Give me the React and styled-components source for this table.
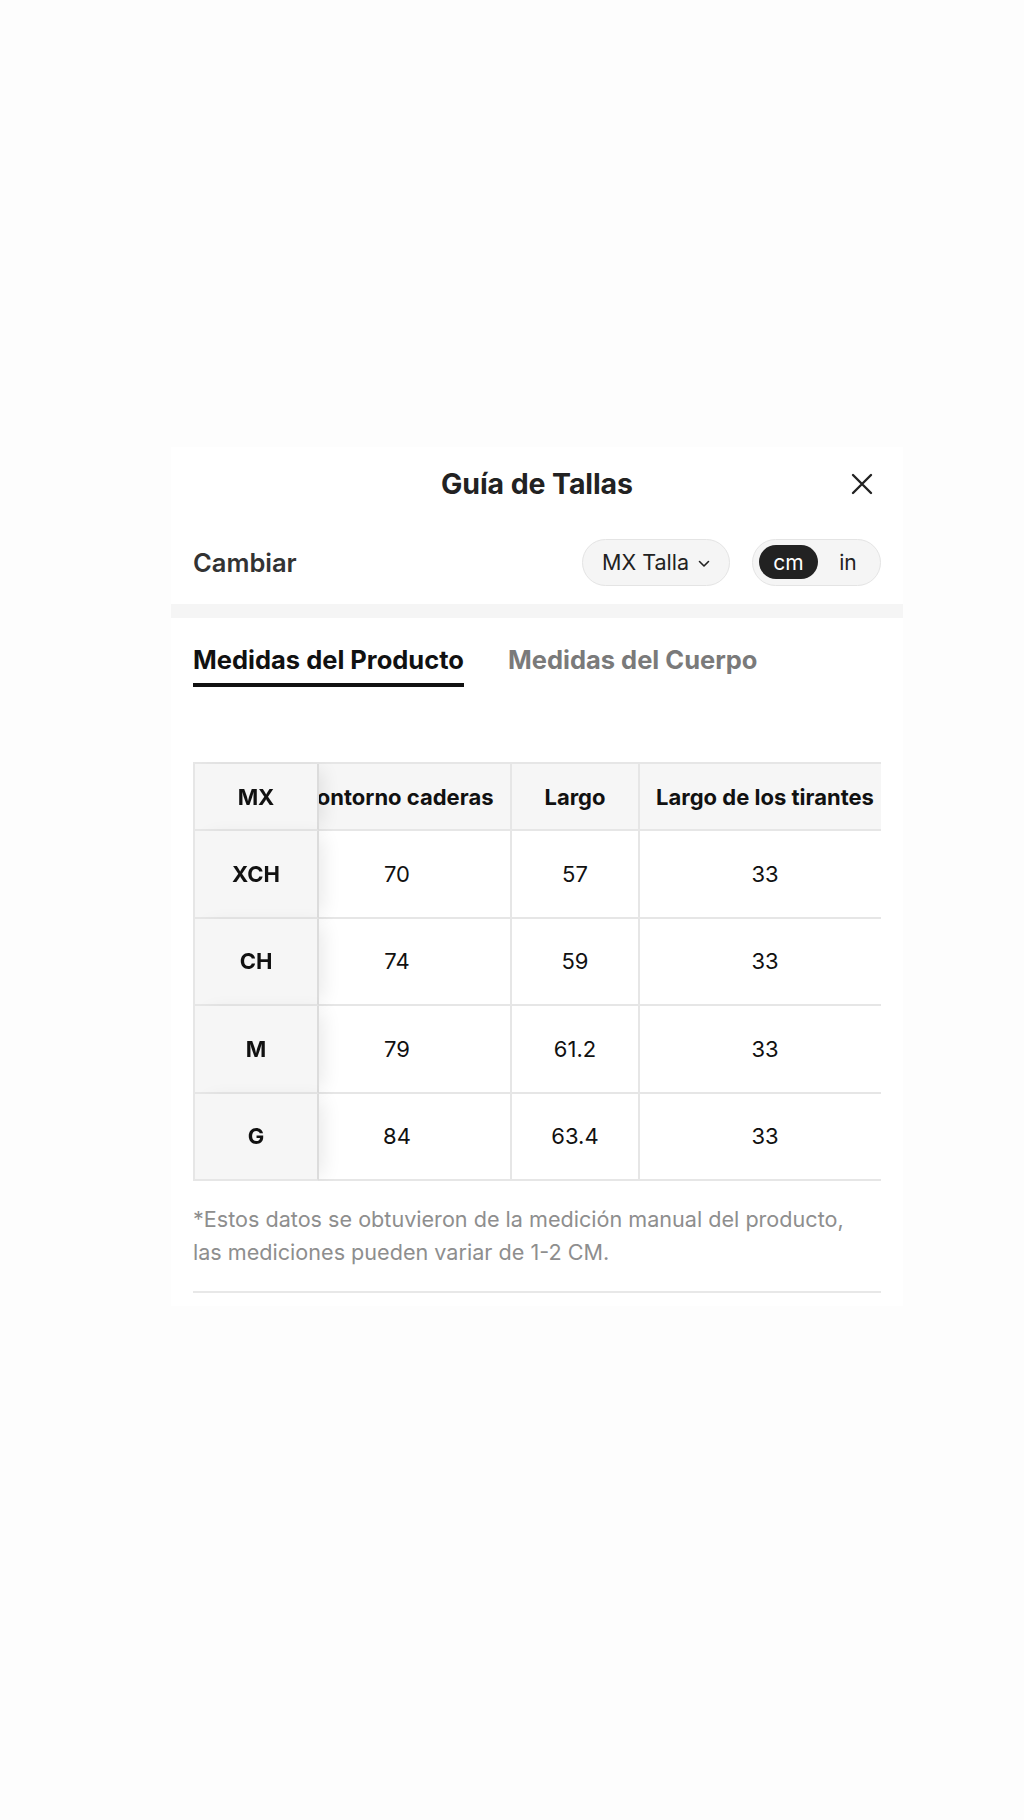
import React, { useEffect, useRef } from "react";
import styled, { createGlobalStyle } from "styled-components";

const GlobalStyle = createGlobalStyle`
  body {
    margin: 0;
    background: #fdfdfd;
    font-family: Inter, "Noto Sans", "Liberation Sans", sans-serif;
    color: #222;
  }
`;

const rows = [
  { size: "XCH", hips: "70", length: "57", straps: "33" },
  { size: "CH", hips: "74", length: "59", straps: "33" },
  { size: "M", hips: "79", length: "61.2", straps: "33" },
  { size: "G", hips: "84", length: "63.4", straps: "33" },
];

export default function App() {
  const scrollRef = useRef(null);
  useEffect(() => {
    if (scrollRef.current) scrollRef.current.scrollLeft = 35;
  }, []);

  return (
    <>
      <GlobalStyle />
      <Page>
        <Panel>
          <Header>
            <Title>Guía de Tallas</Title>
            <CloseBtn aria-label="Cerrar">
              <svg width="24" height="24" viewBox="0 0 24 24">
                <path
                  d="M3 3 L21 21 M21 3 L3 21"
                  stroke="#222"
                  strokeWidth="2.4"
                  strokeLinecap="round"
                />
              </svg>
            </CloseBtn>
          </Header>

          <SwitchRow>
            <SwitchLabel>Cambiar</SwitchLabel>
            <Controls>
              <SelectPill>
                MX Talla
                <svg width="12" height="8" viewBox="0 0 12 8">
                  <path
                    d="M1.5 1.5 L6 6 L10.5 1.5"
                    fill="none"
                    stroke="#222"
                    strokeWidth="1.6"
                    strokeLinecap="round"
                    strokeLinejoin="round"
                  />
                </svg>
              </SelectPill>
              <UnitToggle>
                <Unit active>cm</Unit>
                <Unit>in</Unit>
              </UnitToggle>
            </Controls>
          </SwitchRow>

          <Band />

          <Tabs>
            <Tab active>Medidas del Producto</Tab>
            <Tab>Medidas del Cuerpo</Tab>
          </Tabs>

          <Body>
            <TableScroll ref={scrollRef}>
              <Table>
                <colgroup>
                  <col style={{ width: 126 }} />
                  <col style={{ width: 228 }} />
                  <col style={{ width: 128 }} />
                  <col style={{ width: 252 }} />
                </colgroup>
                <thead>
                  <tr>
                    <StickyCell as="th" head>
                      MX
                    </StickyCell>
                    <HeadCell>Contorno caderas</HeadCell>
                    <HeadCell>Largo</HeadCell>
                    <HeadCell>Largo de los tirantes</HeadCell>
                  </tr>
                </thead>
                <tbody>
                  {rows.map((r) => (
                    <tr key={r.size}>
                      <StickyCell>{r.size}</StickyCell>
                      <Cell>{r.hips}</Cell>
                      <Cell>{r.length}</Cell>
                      <Cell>{r.straps}</Cell>
                    </tr>
                  ))}
                </tbody>
              </Table>
            </TableScroll>

            <Note>
              *Estos datos se obtuvieron de la medición manual del producto,
              <br />
              las mediciones pueden variar de 1-2 CM.
            </Note>
            <Divider />
          </Body>
        </Panel>
      </Page>
    </>
  );
}

const Page = styled.div`
  min-height: 1820px;
  padding-top: 447px;
  box-sizing: border-box;
`;

const Panel = styled.div`
  width: 732px;
  margin-left: 171px;
  background: #fff;
  padding-bottom: 13px;
`;

const Header = styled.div`
  position: relative;
  height: 73px;
  display: flex;
  align-items: center;
  justify-content: center;
`;

const Title = styled.h2`
  margin: 0;
  font-size: 28.5px;
  font-weight: 700;
  color: #222;
  letter-spacing: -0.1px;
`;

const CloseBtn = styled.button`
  position: absolute;
  right: 29px;
  top: 25px;
  width: 24px;
  height: 24px;
  padding: 0;
  border: none;
  background: transparent;
  display: flex;
`;

const SwitchRow = styled.div`
  height: 84px;
  padding: 0 22px;
  display: flex;
  align-items: center;
  justify-content: space-between;
`;

const SwitchLabel = styled.span`
  font-size: 25.5px;
  font-weight: 600;
  color: #333;
`;

const Controls = styled.div`
  display: flex;
  gap: 22px;
`;

const SelectPill = styled.div`
  width: 148px;
  height: 47px;
  box-sizing: border-box;
  border: 1.5px solid #e4e4e4;
  border-radius: 24px;
  background: #f5f5f5;
  display: flex;
  align-items: center;
  justify-content: center;
  gap: 9px;
  font-size: 21.5px;
  color: #222;
  svg {
    margin-top: 3px;
  }
`;

const UnitToggle = styled.div`
  width: 129px;
  height: 47px;
  box-sizing: border-box;
  border: 1.5px solid #e4e4e4;
  border-radius: 24px;
  background: #f5f5f5;
  display: flex;
  align-items: center;
  padding: 0 6px;
  gap: 4px;
`;

const Unit = styled.span`
  height: 34px;
  width: ${(p) => (p.active ? "59px" : "52px")};
  border-radius: 17px;
  display: flex;
  align-items: center;
  justify-content: center;
  font-size: 21px;
  background: ${(p) => (p.active ? "#222" : "transparent")};
  color: ${(p) => (p.active ? "#fff" : "#222")};
`;

const Band = styled.div`
  height: 14px;
  background: #f5f5f5;
`;

const Tabs = styled.div`
  display: flex;
  gap: 44px;
  padding: 27px 22px 0;
`;

const Tab = styled.div`
  font-size: 25.5px;
  font-weight: 700;
  line-height: 30px;
  color: ${(p) => (p.active ? "#111" : "#7a7a7a")};
  padding-bottom: 8px;
  border-bottom: 4px solid ${(p) => (p.active ? "#111" : "transparent")};
`;

const Body = styled.div`
  padding: 75px 22px 0;
`;

const TableScroll = styled.div`
  overflow-x: auto;
  scrollbar-width: none;
  &::-webkit-scrollbar {
    display: none;
  }
`;

const Table = styled.table`
  border-collapse: separate;
  border-spacing: 0;
  table-layout: fixed;
  width: 734px;
  font-size: 22px;
  color: #111;
  border-top: 2px solid #e6e6e6;
`;

const Cell = styled.td`
  height: 85.5px;
  padding: 0;
  text-align: center;
  border-right: 2px solid #e6e6e6;
  border-bottom: 2px solid #e6e6e6;
  background: #fff;
`;

const HeadCell = styled(Cell).attrs({ as: "th" })`
  height: 65px;
  font-weight: 700;
  background: #f6f6f6;
  white-space: nowrap;
`;

const StickyCell = styled.td`
  position: sticky;
  left: 0;
  z-index: 1;
  height: ${(p) => (p.head ? "65px" : "85.5px")};
  padding: 0;
  text-align: center;
  font-weight: 700;
  background: #f6f6f6;
  border-left: 2px solid #e6e6e6;
  border-right: 2px solid #dcdcdc;
  border-bottom: 2px solid #e6e6e6;
  box-shadow: 10px 0 18px -6px rgba(0, 0, 0, 0.09);
`;

const Note = styled.p`
  margin: 22px 0 0;
  font-size: 21.6px;
  line-height: 33px;
  color: #8e8e8e;
`;

const Divider = styled.div`
  margin-top: 22px;
  height: 2px;
  background: #e8e8e8;
`;
